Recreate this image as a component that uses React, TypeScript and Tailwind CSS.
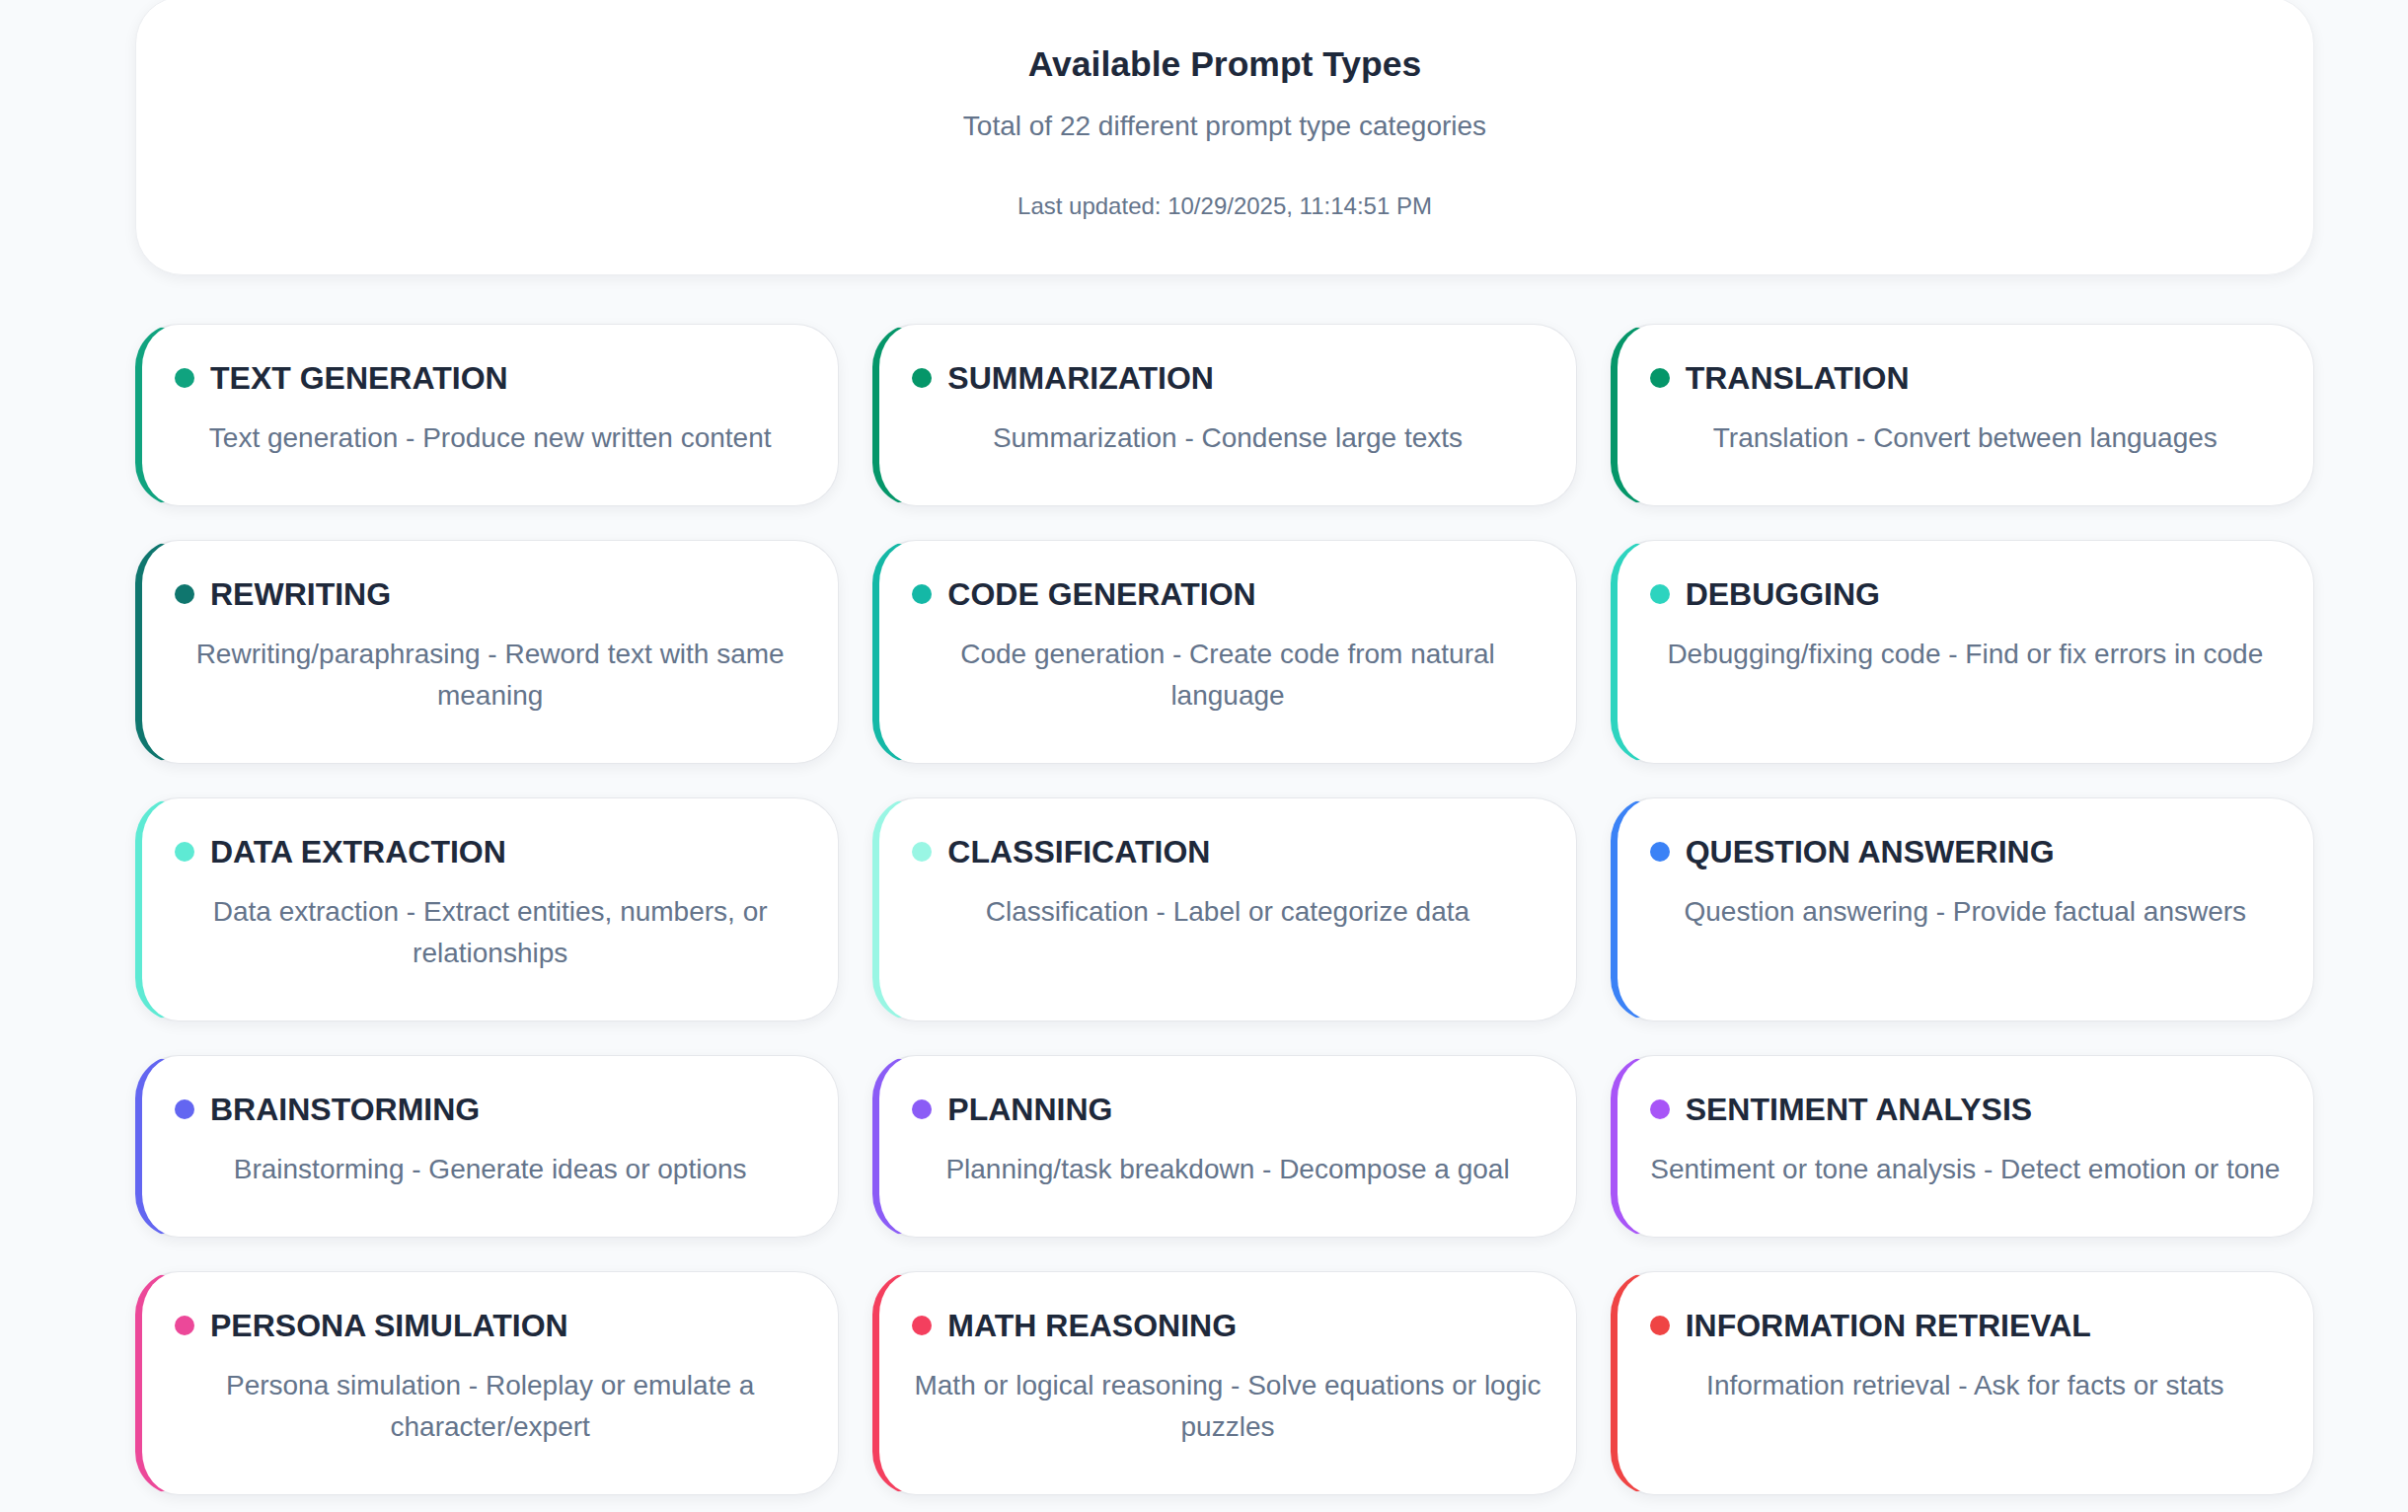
import React from "react";

type PromptType = {
  name: string;
  description: string;
  border: string;
  dot: string;
};

// colour classes are spelled out in full so tailwind picks them up
const promptTypes: PromptType[] = [
  { name: "Text generation", description: "Text generation - Produce new written content", border: "border-l-[#10a37f]", dot: "bg-[#10a37f]" },
  { name: "Summarization", description: "Summarization - Condense large texts", border: "border-l-[#059669]", dot: "bg-[#059669]" },
  { name: "Translation", description: "Translation - Convert between languages", border: "border-l-[#059669]", dot: "bg-[#059669]" },
  { name: "Rewriting", description: "Rewriting/paraphrasing - Reword text with same meaning", border: "border-l-[#0f766e]", dot: "bg-[#0f766e]" },
  { name: "Code generation", description: "Code generation - Create code from natural language", border: "border-l-[#14b8a6]", dot: "bg-[#14b8a6]" },
  { name: "Debugging", description: "Debugging/fixing code - Find or fix errors in code", border: "border-l-[#2dd4bf]", dot: "bg-[#2dd4bf]" },
  { name: "Data extraction", description: "Data extraction - Extract entities, numbers, or relationships", border: "border-l-[#5eead4]", dot: "bg-[#5eead4]" },
  { name: "Classification", description: "Classification - Label or categorize data", border: "border-l-[#99f6e4]", dot: "bg-[#99f6e4]" },
  { name: "Question answering", description: "Question answering - Provide factual answers", border: "border-l-[#3b82f6]", dot: "bg-[#3b82f6]" },
  { name: "Brainstorming", description: "Brainstorming - Generate ideas or options", border: "border-l-[#6366f1]", dot: "bg-[#6366f1]" },
  { name: "Planning", description: "Planning/task breakdown - Decompose a goal", border: "border-l-[#8b5cf6]", dot: "bg-[#8b5cf6]" },
  { name: "Sentiment analysis", description: "Sentiment or tone analysis - Detect emotion or tone", border: "border-l-[#a855f7]", dot: "bg-[#a855f7]" },
  { name: "Persona simulation", description: "Persona simulation - Roleplay or emulate a character/expert", border: "border-l-[#ec4899]", dot: "bg-[#ec4899]" },
  { name: "Math reasoning", description: "Math or logical reasoning - Solve equations or logic puzzles", border: "border-l-[#f43f5e]", dot: "bg-[#f43f5e]" },
  { name: "Information retrieval", description: "Information retrieval - Ask for facts or stats", border: "border-l-[#ef4444]", dot: "bg-[#ef4444]" },
];

const TOTAL_TYPES = 22;

function PromptCard({ item }: { item: PromptType }) {
  return (
    <div
      className={`bg-white rounded-[44px] border border-[#e5e7eb] border-l-[7px] ${item.border} shadow-[0_4px_14px_rgba(15,23,42,0.06)] pl-[33px] pr-[33px] pt-[35px] pb-[47px]`}
    >
      <div className="flex items-center gap-[16px]">
        <span className={`w-[20px] h-[20px] rounded-full shrink-0 ${item.dot}`} />
        <h3 className="text-[32px] leading-[38px] font-bold uppercase text-[#1e293b]">
          {item.name}
        </h3>
      </div>
      <p className="-mx-[6px] mt-[21px] text-center text-[28px] leading-[42px] text-[#64748b]">
        {item.description}
      </p>
    </div>
  );
}

export default function App() {
  return (
    <main className="h-screen overflow-hidden bg-[#f8fafc] font-['Liberation_Sans',Arial,sans-serif]">
      <div className="ml-[137px] w-[2208px]">
        <section className="-mt-[4px] bg-white rounded-[48px] border border-[#eceef1] shadow-[0_4px_14px_rgba(15,23,42,0.06)] pt-[47px] pb-[51px] text-center">
          <h1 className="text-[35.5px] leading-[43px] font-bold text-[#1e293b]">
            Available Prompt Types
          </h1>
          <p className="mt-[20px] text-[28px] leading-[42px] text-[#64748b]">
            Total of {TOTAL_TYPES} different prompt type categories
          </p>
          <p className="mt-[42px] text-[24px] leading-[36px] text-[#64748b]">
            Last updated: 10/29/2025, 11:14:51 PM
          </p>
        </section>

        <section className="mt-[49px] grid grid-cols-3 gap-x-[34px] gap-y-[34px]">
          {promptTypes.map((t) => (
            <PromptCard key={t.name} item={t} />
          ))}
        </section>
      </div>
    </main>
  );
}
